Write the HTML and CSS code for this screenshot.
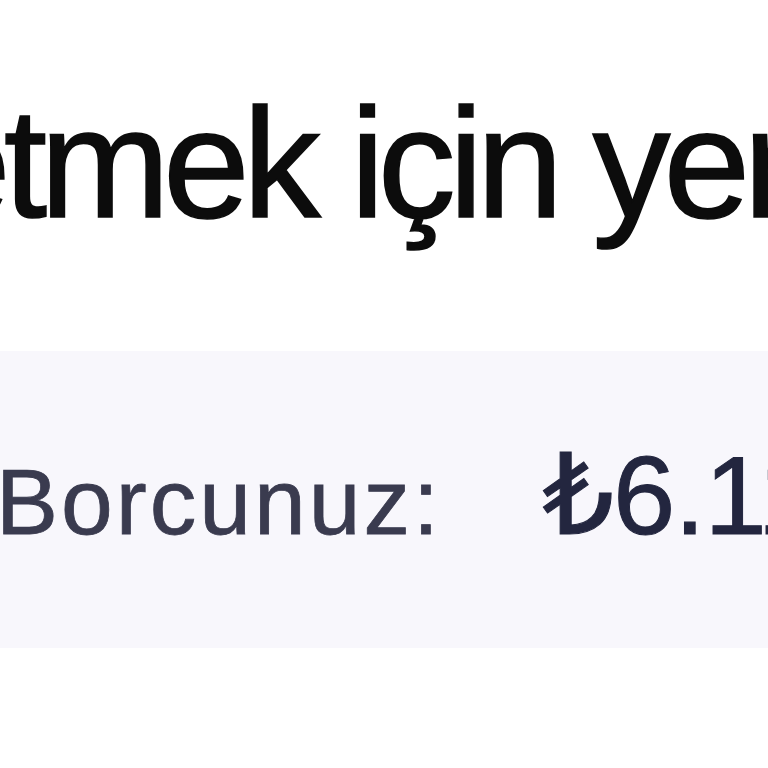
FILE: index.html
```html
<!DOCTYPE html>
<html lang="tr">
<head>
<meta charset="utf-8">
<title>Borcunuz</title>
<link rel="stylesheet" href="styles.css">
</head>
<body>
<main class="page">
  <h1 class="title">etmek için yeri</h1>
  <section class="debt">
    <span class="debt-label">Borcunuz:</span>
    <span class="debt-amount">₺6.11</span>
  </section>
</main>
</body>
</html>
```

FILE: styles.css
```css
html, body {
  margin: 0;
  padding: 0;
  background: #ffffff;
  overflow: hidden;
}

.page {
  width: 768px;
  height: 768px;
  overflow: hidden;
  padding-top: 86px;
  box-sizing: border-box;
  font-family: "Liberation Sans", Arial, "DejaVu Sans", sans-serif;
}

.title {
  margin: 0 0 110px -76px;
  font-size: 156px;
  line-height: 155px;
  font-weight: 400;
  letter-spacing: -7px;
  color: #0c0c0c;
  white-space: nowrap;
  -webkit-text-stroke: 1.5px #0c0c0c;
}

.debt {
  display: flex;
  align-items: baseline;
  gap: 101px;
  height: 297px;
  box-sizing: border-box;
  padding: 88px 0 0 0;
  background: #f8f7fc;
  white-space: nowrap;
}

.debt-label {
  margin-left: -4px;
  font-size: 93px;
  line-height: 93px;
  letter-spacing: 3px;
  color: #3a3b4f;
  -webkit-text-stroke: 0.8px #3a3b4f;
}

.debt-amount {
  font-size: 112px;
  line-height: 114px;
  letter-spacing: -1px;
  color: #23263f;
  -webkit-text-stroke: 1px #23263f;
}
```
